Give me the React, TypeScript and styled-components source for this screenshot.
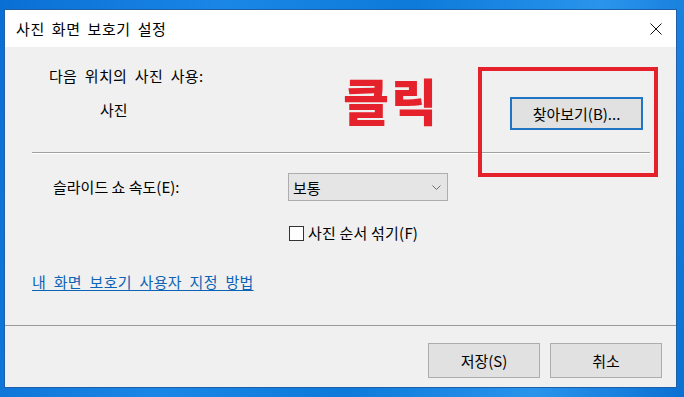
import * as React from 'react';
import styled, { createGlobalStyle } from 'styled-components';

const colors = {
  DESKTOP: '#0a78d8',
  BORDER: '#1d5fa8',
  FACE: '#f0f0f0',
  BUTTON: '#e1e1e1',
  BUTTON_BORDER: '#adadad',
  FOCUS: '#1f74c4',
  TEXT: '#000000',
  LINK: '#0b63b6',
  RED: '#e5222b',
};

const GlobalStyle = createGlobalStyle`
  html, body {
    margin: 0;
    padding: 0;
    width: 684px;
    height: 397px;
    overflow: hidden;
  }
  body {
    font-family: 'Noto Sans CJK KR', 'Noto Sans', sans-serif;
    font-size: 15px;
    color: ${colors.TEXT};
  }
`;

const Desktop = styled.div`
  width: 684px;
  height: 397px;
  box-sizing: border-box;
  padding: 9px 7px 9px 4px;
  display: flex;
  background: linear-gradient(
    100deg,
    #0a6fd4 0%,
    #1a86e6 30%,
    #0d7ada 55%,
    #2a94ec 80%,
    #0a70d2 100%
  );
`;

const Window = styled.div`
  flex: 1;
  display: flex;
  flex-direction: column;
  border: 1px solid ${colors.BORDER};
  background: ${colors.FACE};
`;

const TitleBar = styled.div`
  height: 37px;
  flex-shrink: 0;
  background: #ffffff;
  display: flex;
  align-items: center;
  justify-content: space-between;
  padding: 0 14px 0 11px;
`;

const Title = styled.div`
  font-size: 15px;
  letter-spacing: 0.6px;
  word-spacing: 3px;
  line-height: 20px;
`;

const CloseButton = styled.div`
  width: 12px;
  height: 12px;
  display: flex;
`;

const Body = styled.div`
  position: relative;
  flex: 1;
  padding: 0 26px 0 27px;
`;

const TopSection = styled.div`
  height: 105px;
  display: flex;
  justify-content: space-between;
  padding: 0 7px 0 17px;
`;

const SourceColumn = styled.div`
  display: flex;
  flex-direction: column;
`;

const Label = styled.div<{ $indent?: number; $top?: number; $wide?: boolean }>`
  font-size: 15px;
  line-height: 20px;
  white-space: nowrap;
  padding-left: ${({ $indent }) => $indent || 0}px;
  margin-top: ${({ $top }) => $top || 0}px;
  letter-spacing: ${({ $wide }) => ($wide ? '0.3px' : '0')};
  word-spacing: ${({ $wide }) => ($wide ? '4px' : '0')};
`;

const PushButton = styled.button<{ $focused?: boolean; $width: number }>`
  width: ${({ $width }) => $width}px;
  height: ${({ $focused }) => ($focused ? 33 : 35)}px;
  box-sizing: border-box;
  background: ${colors.BUTTON};
  border: ${({ $focused }) =>
    $focused ? `2px solid ${colors.FOCUS}` : `1px solid ${colors.BUTTON_BORDER}`};
  border-radius: 0;
  padding: 0;
  font-family: inherit;
  font-size: 15px;
  color: ${colors.TEXT};
  display: flex;
  align-items: center;
  justify-content: center;
`;

const BrowseSlot = styled.div`
  padding-top: 50px;
`;

const Separator = styled.div`
  border-top: 1px solid #a0a0a0;
  border-bottom: 1px solid #ffffff;
`;

const SpeedRow = styled.div`
  margin-top: 19px;
  display: grid;
  grid-template-columns: 256px 160px;
  align-items: center;
`;

const Select = styled.div`
  height: 28px;
  box-sizing: border-box;
  background: #e5e5e5;
  border: 1px solid #adadad;
  display: flex;
  align-items: center;
  justify-content: space-between;
  padding: 0 6px 0 4px;
  font-size: 15px;
`;

const CheckRow = styled.label`
  margin-top: 22px;
  padding-left: 257px;
  display: flex;
  align-items: center;
  gap: 4px;
  font-size: 15px;
  line-height: 20px;
  letter-spacing: 0.2px;
`;

const CheckBox = styled.span`
  width: 15px;
  height: 15px;
  box-sizing: border-box;
  border: 1px solid #333333;
  background: #ffffff;
`;

const HelpLink = styled.a`
  display: inline-block;
  margin-top: 29px;
  font-size: 15px;
  line-height: 20px;
  letter-spacing: 0.3px;
  word-spacing: 4px;
  color: ${colors.LINK};
  text-decoration: underline;
  text-underline-offset: 2px;
`;

const Footer = styled.div`
  height: 62px;
  flex-shrink: 0;
  border-top: 1px solid #9a9a9a;
  display: flex;
  justify-content: flex-end;
  align-items: flex-start;
  gap: 10px;
  padding: 17px 14px 0 0;
  box-sizing: border-box;
`;

const ClickNote = styled.div`
  position: absolute;
  left: 338px;
  top: 24px;
  font-size: 50px;
  line-height: 56px;
  font-weight: 900;
  color: ${colors.RED};
  letter-spacing: 2px;
`;

const Highlight = styled.div`
  position: absolute;
  left: 473px;
  top: 20px;
  width: 180px;
  height: 110px;
  box-sizing: border-box;
  border: 4px solid ${colors.RED};
`;

const Chevron = () => (
  <svg width="9" height="5" viewBox="0 0 9 5">
    <path d="M0.5 0.5 L4.5 4.5 L8.5 0.5" fill="none" stroke="#6d6d6d" strokeWidth="1" />
  </svg>
);

const CloseIcon = () => (
  <svg width="12" height="12" viewBox="0 0 12 12">
    <path d="M0.5 0.5 L11.5 11.5 M11.5 0.5 L0.5 11.5" stroke="#111" strokeWidth="1" />
  </svg>
);

const App: React.FC = () => {
  return (
    <>
      <GlobalStyle />
      <Desktop>
        <Window>
          <TitleBar>
            <Title>사진 화면 보호기 설정</Title>
            <CloseButton>
              <CloseIcon />
            </CloseButton>
          </TitleBar>
          <Body>
            <TopSection>
              <SourceColumn>
                <Label $top={19} $wide>
                  다음 위치의 사진 사용:
                </Label>
                <Label $top={14} $indent={51}>
                  사진
                </Label>
              </SourceColumn>
              <BrowseSlot>
                <PushButton $focused $width={133}>
                  찾아보기(B)...
                </PushButton>
              </BrowseSlot>
            </TopSection>
            <Separator />
            <SpeedRow>
              <Label $indent={21}>슬라이드 쇼 속도(E):</Label>
              <Select>
                <span>보통</span>
                <Chevron />
              </Select>
            </SpeedRow>
            <CheckRow>
              <CheckBox />
              <span>사진 순서 섞기(F)</span>
            </CheckRow>
            <HelpLink>내 화면 보호기 사용자 지정 방법</HelpLink>
            <ClickNote>클릭</ClickNote>
            <Highlight />
          </Body>
          <Footer>
            <PushButton $width={112}>저장(S)</PushButton>
            <PushButton $width={112}>취소</PushButton>
          </Footer>
        </Window>
      </Desktop>
    </>
  );
};

export default App;
